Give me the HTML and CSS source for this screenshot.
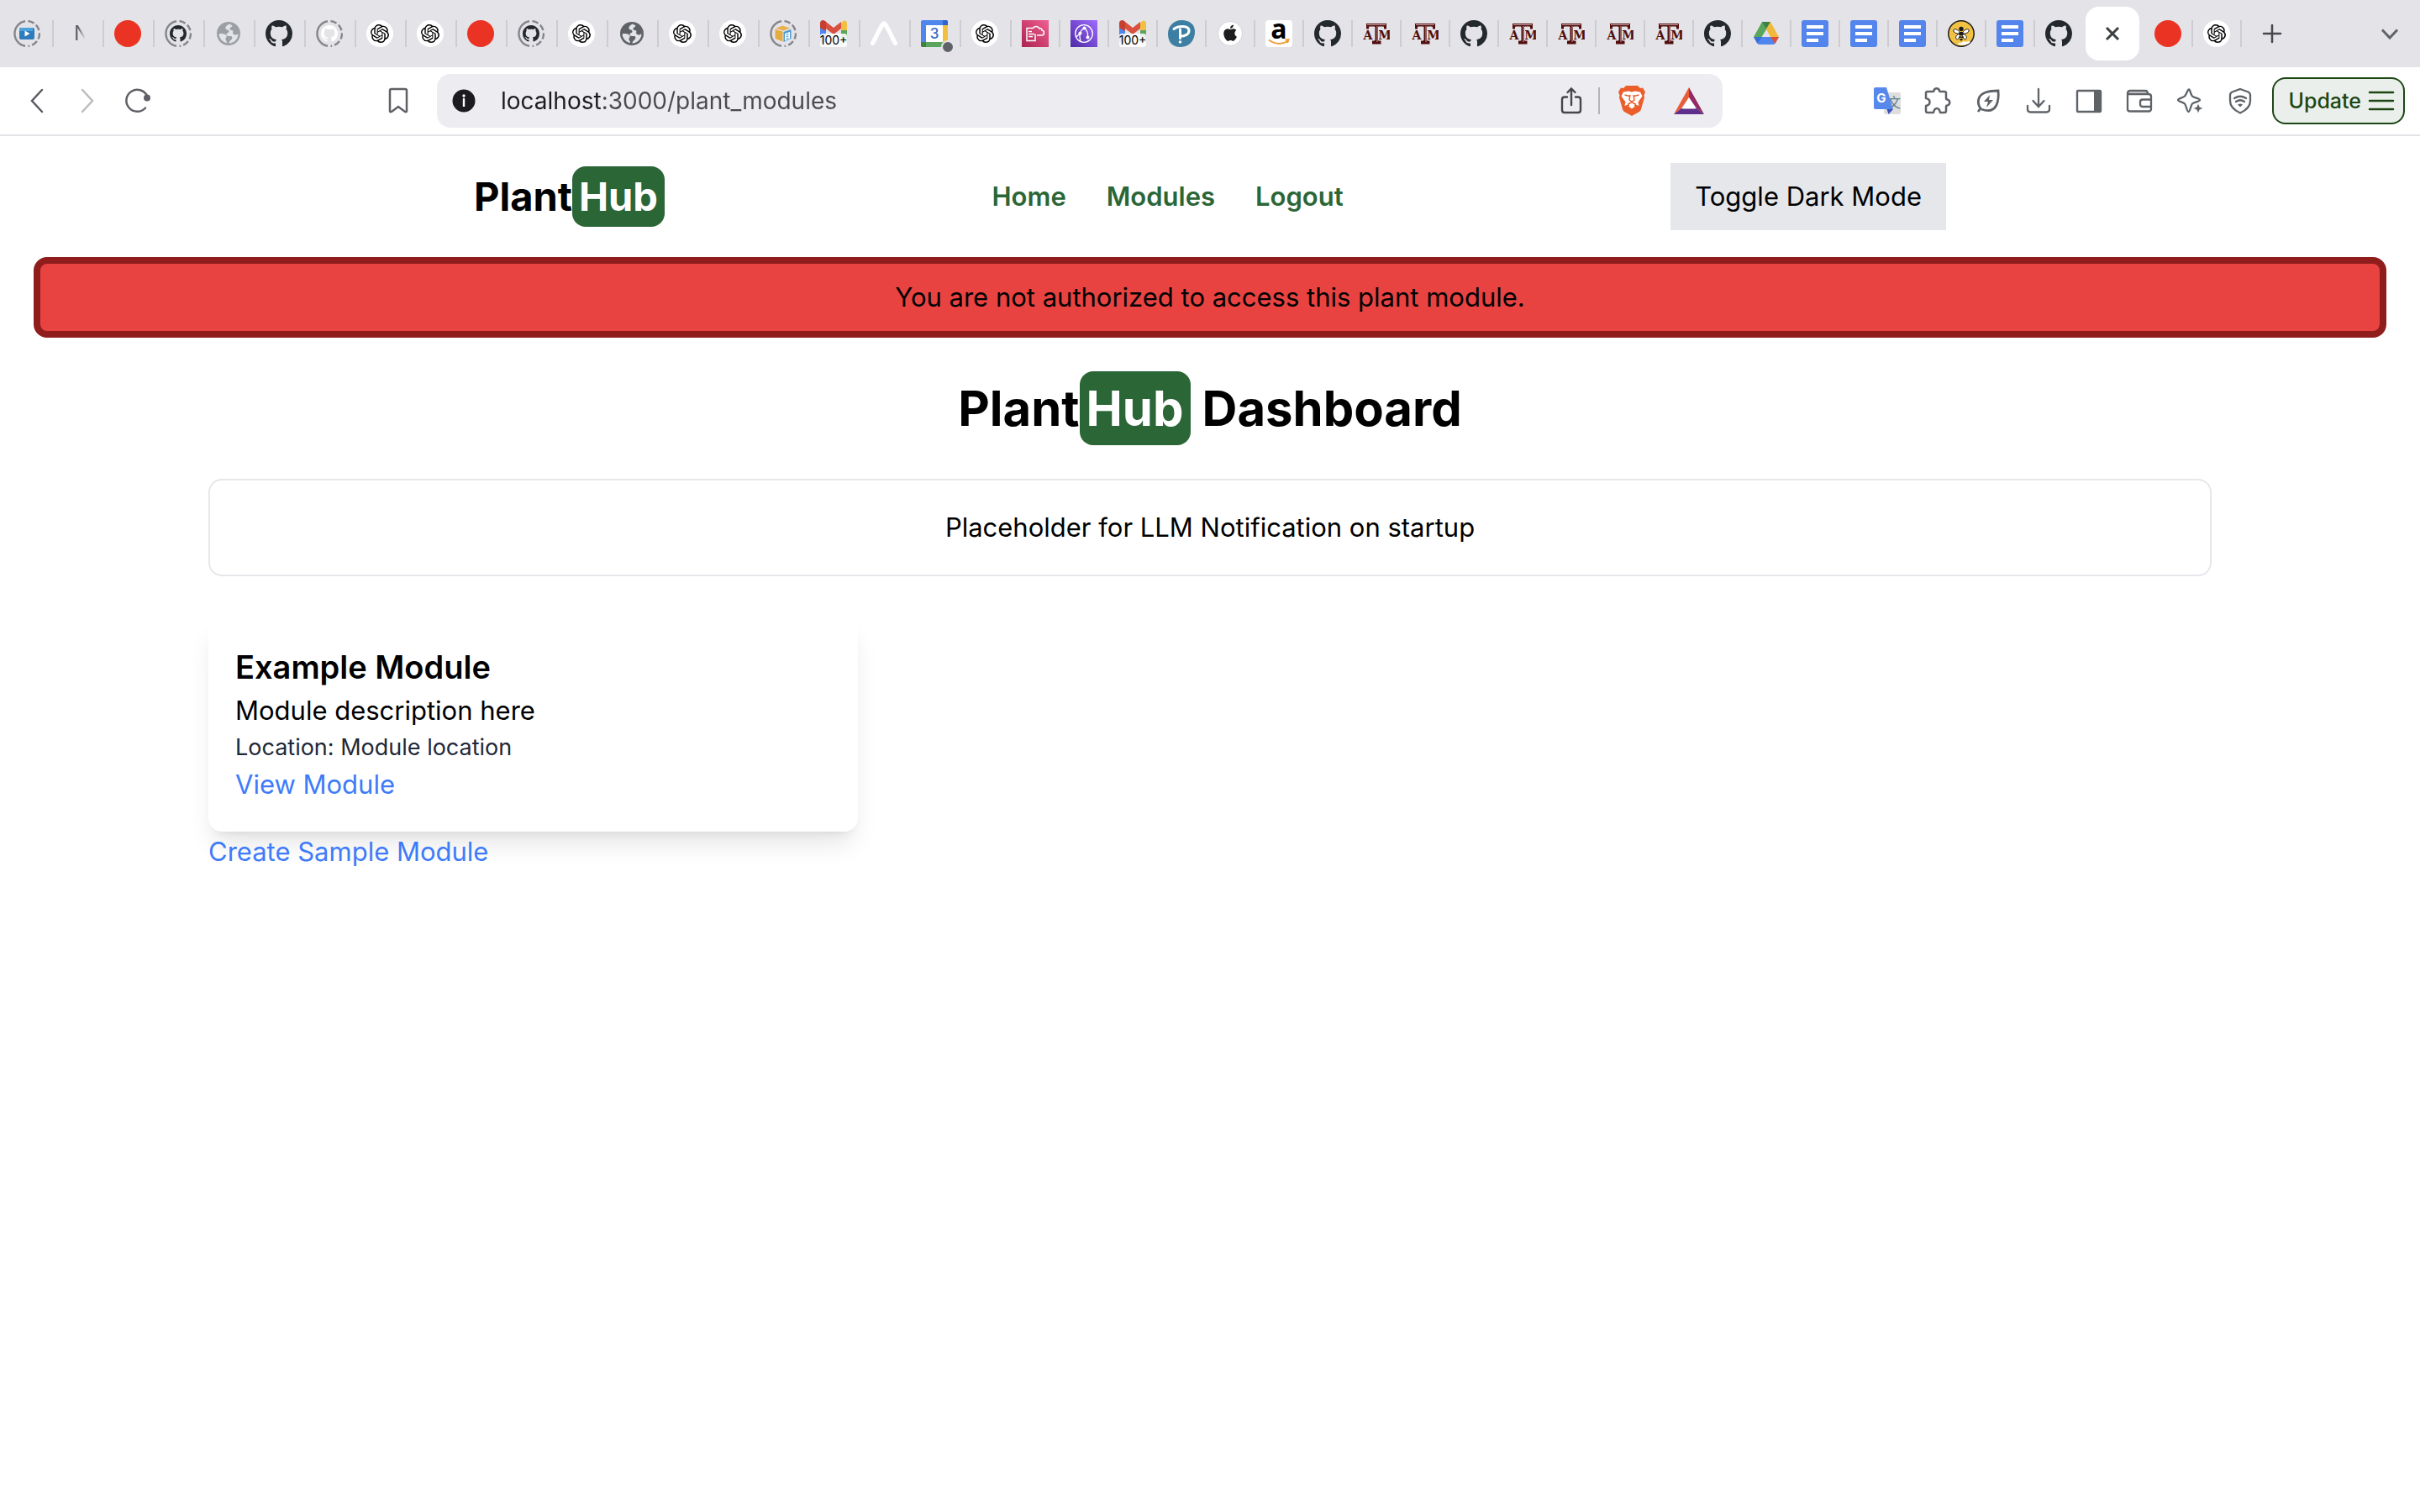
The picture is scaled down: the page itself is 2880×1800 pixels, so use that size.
FILE: index.html
```html
<!DOCTYPE html>
<html lang="en">
<head>
<meta charset="utf-8">
<title>PlantHub</title>
<link rel="stylesheet" href="styles.css">
</head>
<body>
<svg class="gradients" aria-hidden="true">
  <defs>
    <linearGradient id="pink" x1="0" y1="1" x2="1" y2="0"><stop offset="0" stop-color="#ac234f"/><stop offset="1" stop-color="#f05f92"/></linearGradient>
    <linearGradient id="purple" x1="0" y1="1" x2="1" y2="0"><stop offset="0" stop-color="#4c2aa5"/><stop offset="1" stop-color="#a16bff"/></linearGradient>
  </defs>
</svg>
<svg class="sprite" aria-hidden="true">
  <symbol id="ring" viewBox="0 0 32 32">
    <path d="M14 1.2A15 15 0 0 0 14 30.8" fill="none" stroke="#85868b" stroke-width="2.4"/>
    <path d="M17.500 1.100A15 15 0 0 1 30.900 17.500A15 15 0 0 1 17.500 30.900" fill="none" stroke="#85868b" stroke-width="2.400" stroke-dasharray="7.500 3"/>
  </symbol>
  <symbol id="github" viewBox="0 0 16 16"><path fill="currentColor" d="M8 0C3.58 0 0 3.58 0 8c0 3.54 2.29 6.53 5.47 7.59.4.07.55-.17.55-.38 0-.19-.01-.82-.01-1.49-2.01.37-2.53-.49-2.69-.94-.09-.23-.48-.94-.82-1.13-.28-.15-.68-.52-.01-.53.63-.01 1.08.58 1.23.82.72 1.21 1.87.87 2.33.66.07-.52.28-.87.51-1.07-1.78-.2-3.64-.89-3.64-3.95 0-.87.31-1.59.82-2.15-.08-.2-.36-1.02.08-2.12 0 0 .67-.21 2.2.82.64-.18 1.32-.27 2-.27.68 0 1.36.09 2 .27 1.53-1.04 2.2-.82 2.2-.82.44 1.1.16 1.92.08 2.12.51.56.82 1.27.82 2.15 0 3.07-1.87 3.75-3.65 3.95.29.25.54.73.54 1.48 0 1.07-.01 1.93-.01 2.2 0 .21.15.46.55.38A8.013 8.013 0 0 0 16 8c0-4.42-3.58-8-8-8z"/></symbol>
  <symbol id="github-ring" viewBox="0 0 32 32"><use href="#ring"/><use href="#github" x="6" y="6" width="20" height="20"/></symbol>
  <symbol id="video" viewBox="0 0 32 32"><use href="#ring"/><rect x="7" y="9" width="18" height="14" rx="2" fill="#2f7cba"/><path d="M7 11a2 2 0 0 1 2-2h14v4H7z" fill="#4ba3dc"/><path d="M13.500 12.500v7l6-3.500z" fill="#fff"/></symbol>
  <symbol id="globe" viewBox="0 0 32 32"><circle cx="16" cy="16" r="14" fill="currentColor"/><path fill="#e4e3e8" d="M17 4.500c-2 1-5 2.500-4.500 5.500 .5 2 4 1 4 3.500 0 2-3 1.500-3 3.500 0 2 2.500 2 5 2 2 0 2.500 2.500 1 4-1.500 1.500-3 2-3 4.500A11.500 11.500 0 0 0 27.500 16c-2 2-4.500 2-6 .5-1-1.500.5-3-.5-4-1-1-3.500 0-3.500-2s2.500-2 3-4zM4.500 16.500c3-1 7.500-.5 9 2 1 2-1.500 2.500-1 4.500.3 1.500 1.500 2 1.500 4.300A11.600 11.600 0 0 1 4.500 16.500z"/></symbol>
  <symbol id="red" viewBox="0 0 32 32"><circle cx="16" cy="16" r="16" fill="#eb3323"/></symbol>
  <symbol id="openai" viewBox="0 0 32 32"><circle cx="16" cy="16" r="16" fill="#fff"/><g transform="translate(5 5) scale(.917)"><path d="M22.2819 9.8211a5.9847 5.9847 0 0 0-.5157-4.9108 6.0462 6.0462 0 0 0-6.5098-2.9A6.0651 6.0651 0 0 0 4.9807 4.1818a5.9847 5.9847 0 0 0-3.9977 2.9 6.0462 6.0462 0 0 0 .7427 7.0966 5.98 5.98 0 0 0 .511 4.9107 6.051 6.051 0 0 0 6.5146 2.9001A5.9847 5.9847 0 0 0 13.2599 24a6.0557 6.0557 0 0 0 5.7718-4.2058 5.9894 5.9894 0 0 0 3.9977-2.9001 6.0557 6.0557 0 0 0-.7475-7.0729zm-9.022 12.6081a4.4755 4.4755 0 0 1-2.8764-1.0408l.1419-.0804 4.7783-2.7582a.7948.7948 0 0 0 .3927-.6813v-6.7369l2.02 1.1686a.071.071 0 0 1 .038.052v5.5826a4.504 4.504 0 0 1-4.4945 4.4944zm-9.6607-4.1254a4.4708 4.4708 0 0 1-.5346-3.0137l.142.0852 4.783 2.7582a.7712.7712 0 0 0 .7806 0l5.8428-3.3685v2.3324a.0804.0804 0 0 1-.0332.0615L9.74 19.9502a4.4992 4.4992 0 0 1-6.1408-1.6464zM2.3408 7.8956a4.485 4.485 0 0 1 2.3655-1.9728V11.6a.7664.7664 0 0 0 .3879.6765l5.8144 3.3543-2.0201 1.1685a.0757.0757 0 0 1-.071 0l-4.8303-2.7865A4.504 4.504 0 0 1 2.3408 7.872zm16.5963 3.8558L13.1038 8.364 15.1192 7.2a.0757.0757 0 0 1 .071 0l4.8303 2.7913a4.4944 4.4944 0 0 1-.6765 8.1042v-5.6772a.79.79 0 0 0-.407-.667zm2.0107-3.0231l-.142-.0852-4.7735-2.7818a.7759.7759 0 0 0-.7854 0L9.409 9.2297V6.8974a.0662.0662 0 0 1 .0284-.0615l4.8303-2.7866a4.4992 4.4992 0 0 1 6.6802 4.66zM8.3065 12.863l-2.02-1.1638a.0804.0804 0 0 1-.038-.0567V6.0742a4.4992 4.4992 0 0 1 7.3757-3.4537l-.142.0805L8.704 5.459a.7948.7948 0 0 0-.3927.6813zm1.0976-2.3654l2.602-1.4998 2.6069 1.4998v2.9994l-2.5974 1.4997-2.6067-1.4997Z"/></g></symbol>
  <symbol id="box" viewBox="0 0 32 32"><use href="#ring"/><path d="M7 10l8-3.500 9.500 3-8 3z" fill="#e8b04a"/><path d="M6.500 11l9 2.500V25.500l-9-3.500z" fill="#e5ac42"/><path d="M16.500 14l9-3v11l-9 4z" fill="#4a9bd3"/><path d="M18 16l6-2v8l-6 2.500z" fill="#fff"/><path d="M19.500 17.500l3-1M19.500 20l3-1M19.500 22.500l3-1" stroke="#4a9bd3" stroke-width="1.200"/></symbol>
  <symbol id="gmail" viewBox="0 0 32 32"><path d="M0 6h7v20H0z" fill="#4f86ee"/><path d="M25 6h7v20h-7z" fill="#59a55c"/><path d="M25 4c3-5 7-4 7 0v8h-7z" fill="#f1bf42"/><path d="M0 4c0-4 4-5 7-2l9 7 9-7v8l-9 7L7 10v3L0 9z" fill="#d9503f"/><path d="M0 4c0-4 4-5 7-2v11L0 9z" fill="#c5402f"/><rect y="16" width="32" height="16" rx="3" fill="#fff" fill-opacity=".86"/><text x="16" y="29" text-anchor="middle" class="badge-text">100+</text></symbol>
  <symbol id="expo" viewBox="0 0 32 32"><path d="M2.500 27.500C8 18 11 9 15 4.500q1-1 2 0C21 9 24 18 29.500 27.500" fill="none" stroke="#fff" stroke-width="5" stroke-linecap="round"/></symbol>
  <symbol id="calendar" viewBox="0 0 40 40"><rect width="32" height="32" rx="2" fill="#4f86ee"/><path d="M26 0h4a2 2 0 0 1 2 2v4h-6z" fill="#2e64cc"/><path d="M26 6h6v20h-6z" fill="#f1bf42"/><path d="M0 26h6v6H2a2 2 0 0 1-2-2z" fill="#3f8142"/><path d="M6 26h26v6H6z" fill="#59a55c"/><path d="M6 6h20v20H6z" fill="#fff"/><text x="16" y="22" text-anchor="middle" class="calendar-text">3</text><circle cx="32" cy="32" r="7" fill="#5f6368" stroke="#e4e3e8" stroke-width="2"/></symbol>
  <symbol id="cloud-doc" viewBox="0 0 32 32"><path d="M0 0h32v32H0z" fill="url(#pink)"/><path d="M13 9.500H6v15h10v-8M8 13.500h4M8 16.500h7M8 19.500h5M13.500 10c1-3.500 6-3.500 7.500 0 2-1 3 .5 3 2 3.500.5 3 6 0 6h-6" fill="none" stroke="#fff" stroke-width="1.500"/></symbol>
  <symbol id="network" viewBox="0 0 32 32"><path d="M0 0h32v32H0z" fill="url(#purple)"/><g fill="none" stroke="#fff" stroke-width="1.300"><circle cx="16" cy="16" r="10.300"/><path d="M16 9.500c-5 3-6 9-4 16M17 9.500c3 3 4 7 3.500 11M7 20l4.500-4.500"/></g><g fill="#fff"><circle cx="16.500" cy="9.500" r="2"/><circle cx="11.500" cy="15.500" r="2"/><circle cx="20.500" cy="20.500" r="2"/></g></symbol>
  <symbol id="pearson" viewBox="0 0 32 32"><path d="M16 0C26 0 32 5 32 14S26 32 15 32 0 25 0 16 7 0 16 0z" fill="#3d7fa3"/><path d="M7 10.500C11 7 25 5 25 12.500c0 5-6 6.500-9.500 6.500M14.500 11v10.500" fill="none" stroke="#fff" stroke-width="3" stroke-linecap="round"/><circle cx="14.500" cy="26" r="1.800" fill="#fff"/></symbol>
  <symbol id="apple" viewBox="0 0 32 32"><circle cx="16" cy="16" r="14.500" fill="#fff" stroke="#d5d5d9"/><path transform="translate(6.500 5.500) scale(.8)" fill="#1d1d1f" d="M12.152 6.896c-.948 0-2.415-1.078-3.96-1.04-2.04.027-3.91 1.183-4.961 3.014-2.117 3.675-.546 9.103 1.519 12.09 1.013 1.454 2.208 3.09 3.792 3.039 1.52-.065 2.09-.987 3.935-.987 1.831 0 2.35.987 3.96.948 1.637-.026 2.676-1.480 3.676-2.948 1.156-1.688 1.636-3.325 1.662-3.415-.039-.013-3.182-1.221-3.220-4.857-.026-3.040 2.480-4.494 2.597-4.559-1.429-2.090-3.623-2.324-4.390-2.376-2-.156-3.675 1.090-4.610 1.090zM15.530 3.830c.843-1.012 1.400-2.427 1.245-3.830-1.207.052-2.662.805-3.532 1.818-.780.896-1.454 2.338-1.273 3.714 1.338.104 2.715-.688 3.559-1.701"/></symbol>
  <symbol id="amazon" viewBox="0 0 32 32"><rect width="32" height="32" rx="4" fill="#fff"/><text x="16" y="22" text-anchor="middle" class="amazon-text">a</text><path d="M4 23.500q11 8 22.500 1.500M23.500 23.500l4-.3-1.500 4" fill="none" stroke="#f19e38" stroke-width="2"/></symbol>
  <symbol id="atm" viewBox="0 0 32 32"><g class="atm-text"><text x="6" y="23" text-anchor="middle">A</text><text x="26" y="23" text-anchor="middle">M</text></g><path d="M3.500 3.500h25v7.500h-4V8H18.500v16H22v5H10.500v-5H14V8H7.500v3h-4z" fill="#500d0a" stroke="#e4e3e8"/><path d="M17 7v19M5 5.500h22" stroke="#c9a9ab" stroke-width="1"/></symbol>
  <symbol id="drive" viewBox="0 0 32 32"><path d="M11 2h10l-5 9-9 15-6-6z" fill="#59a55c"/><path d="M11 2h10l-5 8.500z" fill="#3f8142"/><path d="M21 2l10 18H21l-5-9.500z" fill="#f1b93c"/><path d="M1 20h30l-4 7q-1 2-3 2H8q-2 0-3-2z" fill="#4f86ee"/><path d="M21 20h10l-4.500 8z" fill="#dc4f3c"/><path d="M1 20h10L5.500 28z" fill="#3b6fd8"/></symbol>
  <symbol id="docs" viewBox="0 0 32 32"><rect width="32" height="32" rx="3" fill="#5385ec"/><path d="M6 8h20M6 16h20M6 24h14" stroke="#fff" stroke-width="4"/></symbol>
  <symbol id="bee" viewBox="0 0 32 32"><circle cx="16" cy="16" r="15.200" fill="#f2c244" stroke="#1c1b1a" stroke-width="1.500"/><path d="M12 29q1-3 4-2 3-3 6-1 3-2 5 0-5 5.500-15 3z" fill="#fff"/><path d="M15 15C10 9 6 10 7 13s5 3 8 3c-5 1-6 4-5 6s4 0 5-4zM17 15c5-6 9-5 8-2s-5 3-8 3c5 1 6 4 5 6s-4 0-5-4z" fill="#fff" stroke="#1c1b1a"/><circle cx="16" cy="10.500" r="2.700" fill="#1c1b1a"/><path d="M13.500 14h5v4h-5zM13 19.500h6v1.500h-6zM13.500 22h5l-2.500 3z" fill="#1c1b1a"/></symbol>
</svg>

<header class="chrome">
  <div class="tabs">
    <div class="tab-group tab-group-wide">
      <button class="tab" aria-label="Videos"><svg><use href="#video"/></svg></button>
      <button class="tab"><span class="tab-title">N</span></button>
      <button class="tab" aria-label="Canvas"><svg><use href="#red"/></svg></button>
      <button class="tab" aria-label="GitHub"><svg><use href="#github-ring"/></svg></button>
      <button class="tab globe-light" aria-label="Web page"><svg><use href="#globe"/></svg></button>
      <button class="tab" aria-label="GitHub"><svg><use href="#github"/></svg></button>
      <button class="tab github-white" aria-label="GitHub"><svg><use href="#github-ring"/></svg></button>
      <button class="tab" aria-label="ChatGPT"><svg><use href="#openai"/></svg></button>
      <button class="tab" aria-label="ChatGPT"><svg><use href="#openai"/></svg></button>
      <button class="tab" aria-label="Canvas"><svg><use href="#red"/></svg></button>
      <button class="tab" aria-label="GitHub"><svg><use href="#github-ring"/></svg></button>
      <button class="tab" aria-label="ChatGPT"><svg><use href="#openai"/></svg></button>
      <button class="tab globe-dark" aria-label="Web page"><svg><use href="#globe"/></svg></button>
      <button class="tab" aria-label="ChatGPT"><svg><use href="#openai"/></svg></button>
      <button class="tab" aria-label="ChatGPT"><svg><use href="#openai"/></svg></button>
      <button class="tab" aria-label="Packages"><svg><use href="#box"/></svg></button>
      <button class="tab" aria-label="Gmail"><svg><use href="#gmail"/></svg></button>
      <button class="tab" aria-label="Expo"><svg><use href="#expo"/></svg></button>
      <button class="tab" aria-label="Calendar"><svg class="calendar"><use href="#calendar"/></svg></button>
      <button class="tab" aria-label="ChatGPT"><svg><use href="#openai"/></svg></button>
    </div>
    <div class="tab-group">
      <button class="tab" aria-label="Cloud documents"><svg><use href="#cloud-doc"/></svg></button>
      <button class="tab" aria-label="Cloud network"><svg><use href="#network"/></svg></button>
      <button class="tab" aria-label="Gmail"><svg><use href="#gmail"/></svg></button>
      <button class="tab" aria-label="Pearson"><svg><use href="#pearson"/></svg></button>
      <button class="tab" aria-label="Apple"><svg><use href="#apple"/></svg></button>
      <button class="tab" aria-label="Amazon"><svg><use href="#amazon"/></svg></button>
      <button class="tab" aria-label="GitHub"><svg><use href="#github"/></svg></button>
      <button class="tab" aria-label="Texas A&amp;M"><svg><use href="#atm"/></svg></button>
      <button class="tab" aria-label="Texas A&amp;M"><svg><use href="#atm"/></svg></button>
      <button class="tab" aria-label="GitHub"><svg><use href="#github"/></svg></button>
      <button class="tab" aria-label="Texas A&amp;M"><svg><use href="#atm"/></svg></button>
      <button class="tab" aria-label="Texas A&amp;M"><svg><use href="#atm"/></svg></button>
      <button class="tab" aria-label="Texas A&amp;M"><svg><use href="#atm"/></svg></button>
      <button class="tab" aria-label="Texas A&amp;M"><svg><use href="#atm"/></svg></button>
      <button class="tab" aria-label="GitHub"><svg><use href="#github"/></svg></button>
      <button class="tab" aria-label="Drive"><svg><use href="#drive"/></svg></button>
      <button class="tab" aria-label="Docs"><svg><use href="#docs"/></svg></button>
      <button class="tab" aria-label="Docs"><svg><use href="#docs"/></svg></button>
      <button class="tab" aria-label="Docs"><svg><use href="#docs"/></svg></button>
      <button class="tab" aria-label="Bee"><svg><use href="#bee"/></svg></button>
      <button class="tab" aria-label="Docs"><svg><use href="#docs"/></svg></button>
      <button class="tab tab-last" aria-label="GitHub"><svg><use href="#github"/></svg></button>
    </div>
    <button class="tab-active" aria-label="Close tab"><svg viewBox="0 0 32 32"><path d="M9 9l14 14M23 9L9 23" fill="none" stroke="#3c4043" stroke-width="3"/></svg></button>
    <div class="tab-group">
      <button class="tab" aria-label="Canvas"><svg><use href="#red"/></svg></button>
      <button class="tab" aria-label="ChatGPT"><svg><use href="#openai"/></svg></button>
    </div>
    <button class="tab-tool" aria-label="New tab"><svg viewBox="0 0 32 32"><path d="M16 6v20M6 16h20" stroke="#46484d" stroke-width="2.500" stroke-linecap="round"/></svg></button>
    <button class="tab-tool tab-search" aria-label="Search tabs"><svg viewBox="0 0 32 32"><path d="M7 11.500l9 9.500 9-9.500" fill="none" stroke="#5f6368" stroke-width="3"/></svg></button>
  </div>

  <div class="toolbar">
    <div class="history">
      <button aria-label="Back"><svg viewBox="0 0 32 32"><path d="M22 3L10 16l12 13" fill="none" stroke="#5b5c61" stroke-width="2.500" stroke-linecap="round"/></svg></button>
      <button aria-label="Forward"><svg viewBox="0 0 32 32"><path d="M10 3l12 13L10 29" fill="none" stroke="#bcbcc1" stroke-width="2.500" stroke-linecap="round"/></svg></button>
      <button aria-label="Reload"><svg viewBox="0 0 32 32"><path d="M25 24.500A13 13 0 1 1 27 10" fill="none" stroke="#5f6065" stroke-width="2.500" stroke-linecap="round"/><circle cx="27" cy="12.500" r="4" fill="#5f6065"/></svg></button>
    </div>
    <button class="bookmark" aria-label="Bookmark"><svg viewBox="0 0 32 32"><path d="M6 4q0-2 2-2h16q2 0 2 2v24q0 2-2 1l-8-6-8 6q-2 1-2-1z" fill="none" stroke="#5f6065" stroke-width="2.500"/></svg></button>
    <div class="address">
      <button class="info" aria-label="Site information"><svg viewBox="0 0 32 32"><circle cx="16" cy="16" r="13.500" fill="#1c1b20"/><path d="M16 14v9M15 14h2" stroke="#fff" stroke-width="2.400"/><circle cx="16" cy="10" r="1.700" fill="#fff"/></svg></button>
      <input class="url" type="text" aria-label="Address" value="localhost:3000/plant_modules">
      <div class="address-tools">
        <button aria-label="Share"><svg viewBox="0 0 32 32"><path d="M11 11.500H8q-3 0-3 3V27q0 3 3 3h16q3 0 3-3V14.500q0-3-3-3h-3M16 21V2M11.500 6L16 1.500 20.500 6" fill="none" stroke="#46464b" stroke-width="2.400" stroke-linecap="round"/></svg></button>
        <span class="divider"></span>
        <button class="brave" aria-label="Brave Shields"><svg viewBox="0 0 32 36"><path d="M9 0h14l3 3 3-.5 3 5-1.500 4 .5 2.500-4 14q-.500 2-2 3L16 36l-9-5q-1.500-1-2-3L1 14l.5-2.500L0 7.500l3-5L6 3z" fill="#eb5d2a"/><path d="M6 7.500l6-1 4 1 4-1 6 1 2.500 5-5 7 1 4.500-4-1.500-4.500 2.500-4.500-2.500-4 1.500 1-4.500-5-7z" fill="#fff"/><path d="M7.500 11l6 1.500M24.500 11l-6 1.500M14 11l-1 6 3 2 3-2-1-6M11 22.500l5-3 5 3" fill="none" stroke="#eb5d2a" stroke-width="1.500"/><path d="M12 24.500l4-2.500 4 2.500-4 3z" fill="#fff"/></svg></button>
        <button class="rewards" aria-label="Brave Rewards"><svg viewBox="0 0 36 32"><path d="M18 0L0 32l9-7 9-13z" fill="#ea5c38"/><path d="M18 0l18 32-9-7-9-13z" fill="#932a62"/><path d="M0 32h36l-9-7H9z" fill="#5e2f8c"/><path d="M18 12l8 13.500H10z" fill="#fff"/></svg></button>
      </div>
    </div>
    <div class="extensions">
      <button aria-label="Translate"><svg viewBox="0 0 32 32"><rect x="12" y="6" width="20" height="26" rx="2" fill="#dedede"/><text x="24" y="24" text-anchor="middle" class="translate-cjk">文</text><path d="M2 0h13l8 26H2q-2 0-2-2V2q0-2 2-2z" fill="#5788ec"/><path d="M15.500 26H23l-5.500 6z" fill="#3a52b8"/><text x="9" y="18" text-anchor="middle" class="translate-g">G</text></svg></button>
      <button aria-label="Extensions"><svg viewBox="0 0 32 32"><path d="M4 5h6q1.500 0 1.500-1a3.300 3.300 0 0 1 6.500 0q0 1 1.500 1H24q2 0 2 2v6q0 1.500 1.500 1.500a3.600 3.600 0 0 1 0 7Q26 21.500 26 23v5q0 2-2 2h-5q-1-5-4-5t-4 5H4q-2 0-2-2v-6c6-1 6-8 0-9V7q0-2 2-2z" fill="none" stroke="#5f6368" stroke-width="2.500" stroke-linejoin="round"/></svg></button>
      <button aria-label="Energy saver"><svg viewBox="0 0 32 32"><path d="M4 29l3-4C2 18 4 9 13 6q6-2 15-2 1 10-2 17-5 10-18 5" fill="none" stroke="#5f6368" stroke-width="2.800"/><path d="M18 9l-7 8h5l-2 7 8-9h-5z" fill="#5f6368"/></svg></button>
      <button aria-label="Downloads"><svg viewBox="0 0 32 32"><path d="M16 2v20M9.500 16l6.500 7 6.500-7M3 22v4q0 3.500 3.500 3.500h19q3.500 0 3.500-3.500v-4" fill="none" stroke="#5f6368" stroke-width="2.300" stroke-linecap="round"/></svg></button>
      <button aria-label="Sidebar"><svg viewBox="0 0 32 32"><rect x="2" y="4" width="28" height="25" rx="1" fill="none" stroke="#5f6368" stroke-width="2.400"/><path d="M22 4h8v25h-8z" fill="#5f6368"/></svg></button>
      <button aria-label="Wallet"><svg viewBox="0 0 32 32"><path d="M3 8V5q0-1 2-1h18q2 0 3 4" fill="#dcdce3"/><path d="M26 8q0-4-3-4H5Q2 4 2 7v19q0 2.500 3 2.500h22q3 0 3-3V11q0-3-3-3H3M30 14.500H20q-3 0-3 3V20q0 3 3 3h10" fill="none" stroke="#5f6368" stroke-width="2.300"/></svg></button>
      <button aria-label="Leo AI"><svg viewBox="0 0 32 32"><path d="M15 2.500c1.500 0 2 6 4 8s9 2.500 9 4.500-7 2.500-9 4.500-2.500 9.500-4.500 9.500-2.500-7.500-4.500-9.500-8-2.500-8-4.500 6-2.500 8-4.500 3.500-8 5-8z" fill="none" stroke="#5f6368" stroke-width="2.300"/><path d="M26 19l1.800 4.200L32 25l-4.200 1.800L26 31l-1.800-4.200L20 25l4.200-1.800z" fill="#5f6368" stroke="#fff" stroke-width=".6"/></svg></button>
      <button aria-label="VPN"><svg viewBox="0 0 32 32"><path d="M16 2l9.500 3.500q2.500 1 2.500 4V16q0 9-12 14.500Q4 25 4 16V9.500q0-3 2.500-4z" fill="none" stroke="#5f6368" stroke-width="2.300"/><path d="M9 13q7-4.500 14 0M11 17q5-3.500 10 0" fill="none" stroke="#5f6368" stroke-width="2.300" stroke-linecap="round"/><path d="M13 20.500q3-2 6 0l-3 3z" fill="#5f6368"/></svg></button>
      <button class="update">Update<svg viewBox="0 0 32 32"><path d="M2 6h28M2 16h28M2 26h28" stroke="#1c4714" stroke-width="2.500" stroke-linecap="round"/></svg></button>
    </div>
  </div>
</header>

<nav class="site-nav">
  <a class="brand logo" href="#">Plant<span class="hub">Hub</span></a>
  <div class="links">
    <a href="#">Home</a>
    <a href="#">Modules</a>
    <a href="#">Logout</a>
  </div>
  <button class="theme-toggle">Toggle Dark Mode</button>
</nav>

<p class="alert" role="alert">You are not authorized to access this plant module.</p>

<main class="dashboard">
  <h1 class="brand title">Plant<span class="hub">Hub</span><span class="page-name">Dashboard</span></h1>
  <p class="notice">Placeholder for LLM Notification on startup</p>
  <div class="modules">
    <article class="card">
      <h2>Example Module</h2>
      <p>Module description here</p>
      <p class="location">Location: Module location</p>
      <a href="#">View Module</a>
    </article>
  </div>
  <a class="create" href="#">Create Sample Module</a>
</main>
</body>
</html>
```
FILE: styles.css
```css
* { box-sizing: border-box; margin: 0; padding: 0; }

body {
  background: #fff;
  color: #000;
  font: 31px/48px Inter, "Noto Sans", sans-serif;
}

button, input { font: inherit; color: inherit; background: none; border: 0; }
button { cursor: pointer; }
a { text-decoration: none; }
svg { display: block; flex: none; width: 32px; height: 32px; overflow: visible; }
.gradients { position: absolute; width: 0; height: 0; }
.sprite { display: none; }

/* Tab strip */
.tabs { display: flex; align-items: center; height: 80px; padding: 0 20px 0 4px; background: #e4e3e8; }
.tab-group { display: flex; }
.tab {
  display: flex;
  align-items: center;
  width: 58px;
  height: 32px;
  padding-left: 12px;
  border-right: 2px solid #cdccd1;
  color: #24292e;
}
.tab-group-wide .tab { width: 60px; }
.tab-last { border-color: transparent; }
.tab.globe-light { color: #9ba0a4; }
.tab.globe-dark { color: #5f6368; }
.tab.github-white { color: #fff; }
.tab .calendar { width: 40px; height: 40px; margin-top: 8px; }
.tab-title {
  margin-left: 12px;
  font-size: 24px;
  line-height: 32px;
  color: #5f6368;
  -webkit-mask-image: linear-gradient(90deg, #000 30%, transparent 75%);
  mask-image: linear-gradient(90deg, #000 30%, transparent 75%);
}
.tab-active {
  display: grid;
  place-items: center;
  width: 64px;
  height: 64px;
  margin: 0 6px 0 2px;
  border-radius: 16px;
  background: #fff;
}
.tab-tool { margin-left: 20px; }
.tab-search { margin-left: auto; }

.badge-text { font: 14px Inter, sans-serif; fill: #000; }
.calendar-text { font: 500 17px Inter, sans-serif; fill: #3468cf; }
.amazon-text { font: 700 32px "Open Sans", sans-serif; fill: #000; }
.atm-text { font: 700 14px "DejaVu Serif", serif; fill: #500d0a; }
.translate-g { font: 700 15px Inter, sans-serif; fill: #fff; }
.translate-cjk { font: 16px "Noto Sans CJK SC", sans-serif; fill: #607d87; }

/* Toolbar */
.toolbar {
  display: flex;
  align-items: center;
  height: 82px;
  padding: 0 18px 0 28px;
  border-bottom: 2px solid #e4e3e8;
}
.history { display: flex; gap: 28px; }
.bookmark { margin-left: 278px; }
.address {
  display: flex;
  flex: 1;
  align-items: center;
  height: 64px;
  margin: 0 180px 0 30px;
  padding: 0 22px 0 16px;
  border-radius: 16px;
  background: #edecf1;
}
.info { margin-right: 28px; }
.url {
  flex: 1;
  min-width: 0;
  height: 48px;
  font-size: 28px;
  color: transparent;
  caret-color: #1c1b20;
  background: linear-gradient(90deg, #1c1b20 121px, #4a494e 121px);
  -webkit-background-clip: text;
  background-clip: text;
}
.address-tools { display: flex; align-items: center; }
.divider { width: 2px; height: 32px; margin: 0 22px 0 16px; background: #b4b3b8; }
.brave svg { height: 36px; }
.rewards { margin-left: 34px; }
.rewards svg { width: 36px; }
.extensions { display: flex; align-items: center; gap: 28px; }
.update {
  display: flex;
  align-items: center;
  gap: 8px;
  height: 56px;
  margin-left: -6px;
  padding: 0 10px 0 17px;
  border: 2px solid #1c4714;
  border-radius: 16px;
  background: #ebefec;
  color: #1c4714;
  font-size: 25px;
  font-weight: 500;
}

/* Site navigation */
.site-nav {
  display: flex;
  align-items: center;
  justify-content: space-between;
  max-width: 1752px;
  margin: 0 auto;
  padding: 32px 0;
}
.brand { display: flex; align-items: center; font-weight: 700; color: #000; }
.hub { border-radius: 16px; background: #2b6636; color: #fff; padding: 0 8px; }
.logo { font-size: 47px; line-height: 72px; }
.links { display: flex; gap: 48px; font-weight: 600; }
.links a { color: #2b6636; }
.theme-toggle { padding: 16px 29px; background: #e5e7eb; }

.alert {
  margin: 0 40px;
  padding: 16px;
  border: 8px solid #8f1d1b;
  border-radius: 16px;
  background: #e84341;
  text-align: center;
}

/* Dashboard */
.dashboard { width: 83%; max-width: 2384px; margin: 0 auto; padding: 40px 0; }
.title { justify-content: center; font-size: 58px; line-height: 88px; }
.page-name { margin-left: 14px; }
.notice {
  margin-top: 40px;
  padding: 32px;
  border: 2px solid #e5e7eb;
  border-radius: 16px;
  text-align: center;
}
.modules { display: grid; grid-template-columns: repeat(3, 1fr); gap: 32px; margin-top: 48px; }
.card {
  padding: 32px;
  border-radius: 16px;
  background: #fff;
  box-shadow: 0 20px 30px -6px rgb(0 0 0 / .1), 0 8px 12px -8px rgb(0 0 0 / .1);
}
.card h2 { font-size: 38px; line-height: 56px; font-weight: 600; }
.card .location { font-size: 27px; line-height: 40px; color: #1e2939; }
.card a, .create { display: block; color: #3e7bfa; }
```
